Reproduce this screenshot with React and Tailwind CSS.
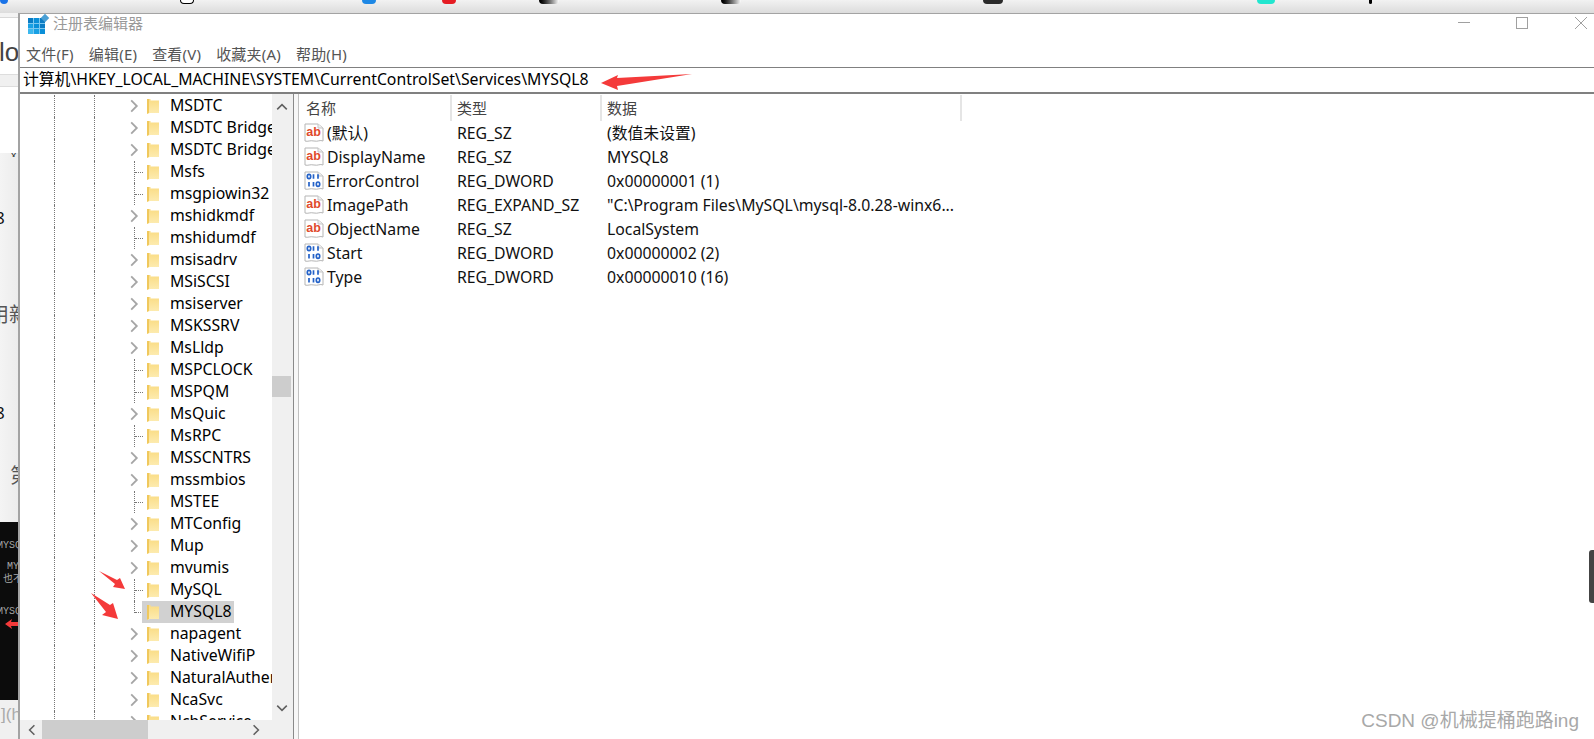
const TREE = [
  ["MSDTC", 1], ["MSDTC Bridge 4.0.0.0", 1], ["MSDTC Bridge 3.0.0.0", 1], ["Msfs", 0], ["msgpiowin32", 0],
  ["mshidkmdf", 1], ["mshidumdf", 0], ["msisadrv", 1], ["MSiSCSI", 1], ["msiserver", 1],
  ["MSKSSRV", 1], ["MsLldp", 1], ["MSPCLOCK", 0], ["MSPQM", 0], ["MsQuic", 1],
  ["MsRPC", 0], ["MSSCNTRS", 1], ["mssmbios", 1], ["MSTEE", 0], ["MTConfig", 1],
  ["Mup", 1], ["mvumis", 1], ["MySQL", 0], ["MYSQL8", 0], ["napagent", 1],
  ["NativeWifiP", 1], ["NaturalAuthentication", 1], ["NcaSvc", 1], ["NcbService", 1],
];

const ROWS = [
  ["ab", "(默认)", "REG_SZ", "(数值未设置)"],
  ["ab", "DisplayName", "REG_SZ", "MYSQL8"],
  ["bin", "ErrorControl", "REG_DWORD", "0x00000001 (1)"],
  ["ab", "ImagePath", "REG_EXPAND_SZ", "\"C:\\Program Files\\MySQL\\mysql-8.0.28-winx6..."],
  ["ab", "ObjectName", "REG_SZ", "LocalSystem"],
  ["bin", "Start", "REG_DWORD", "0x00000002 (2)"],
  ["bin", "Type", "REG_DWORD", "0x00000010 (16)"],
];

const FONT = "font-['Noto_Sans','Noto_Sans_CJK_SC',sans-serif]";

function Folder() {
  return (
    <svg width="12" height="16" viewBox="0 0 12 16" className="shrink-0">
      <defs>
        <linearGradient id="fg" x1="0" y1="0" x2="0" y2="1">
          <stop offset="0" stopColor="#fadc84" />
          <stop offset="1" stopColor="#fdecb2" />
        </linearGradient>
      </defs>
      <path d="M0 1h3.5v1.5H12V15H3L0 16z" fill="url(#fg)" />
      <path d="M0 1h2V14.8L0 16z" fill="#f0c85c" />
    </svg>
  );
}

function Chevron({ dir = "right", color = "#a6a6a6", size = 14 }) {
  const d = {
    right: "M3 1l4 4-4 4",
    left: "M7 1L3 5l4 4",
    up: "M1 7l4-4 4 4",
    down: "M1 3l4 4 4-4",
  }[dir];
  return (
    <svg width={size} height={size} viewBox="0 0 10 10" className="shrink-0">
      <path d={d} fill="none" stroke={color} strokeWidth="1.3" />
    </svg>
  );
}

function RegIcon({ kind }) {
  return (
    <svg width="20" height="20" viewBox="0 0 20 20" className="shrink-0">
      <path d="M1 1h13l5 4v13c-3-1.5-5 1-9 0s-6 1-9 0z" fill="#fff" stroke="#b5b5b5" />
      <path d="M14 1v4h5" fill="#eee" stroke="#c5c5c5" />
      {kind === "ab" ? (
        <text x="2.3" y="13" fontSize="12.5" fontWeight="700" fill="#e0492c" fontFamily="Liberation Sans, sans-serif">ab</text>
      ) : (
        <g fill="none" stroke="#2462c8" strokeWidth="1.7">
          <ellipse cx="5" cy="5.5" rx="1.7" ry="2.2" />
          <path d="M9.5 3.3v4.5M14 3.3v4.5" />
          <path d="M5 11v4.5M9.5 11v4.5" />
          <ellipse cx="14" cy="13.2" rx="1.7" ry="2.2" />
        </g>
      )}
    </svg>
  );
}

function TreeRow({ name, exp }) {
  const selected = name === "MYSQL8";
  return (
    <div className="flex h-[22px] shrink-0 items-center">
      <div className="w-[34px] shrink-0" />
      <div className="h-full w-[40px] shrink-0 border-l border-dotted border-[#777]" />
      <div className="h-full w-[40px] shrink-0 border-l border-dotted border-[#777]" />
      <div className="flex h-full w-[8px] shrink-0 items-center">
        {exp ? (
          <div className="ml-[-7px]"><Chevron /></div>
        ) : (
          <>
            <div className={`w-0 self-start border-l border-dotted border-[#777] ${selected ? "h-[12px]" : "h-full"}`} />
            <div className="h-0 w-[8px] shrink-0 border-t border-dotted border-[#777]" />
          </>
        )}
      </div>
      <div className={`flex h-full items-center pl-[5px] pr-[2px] ${selected ? "bg-[#d1d1d1]" : ""}`}>
        <Folder />
        <span className="mb-[1px] ml-[11px] whitespace-nowrap text-[15.8px] text-black">{name}</span>
      </div>
    </div>
  );
}

function TopStrip() {
  const marks = [
    ["w-[8px] bg-[#1a73e8]", 0], ["w-[14px] bg-white border-x border-b border-black", 172], ["w-[14px] bg-[#1e88e5]", 168],
    ["w-[14px] bg-[#e51c23]", 66], ["w-[20px] bg-gradient-to-r from-black to-white", 83], ["w-[20px] bg-gradient-to-r from-black to-white", 162],
    ["w-[20px] bg-[#2b2b2b]", 242], ["w-[18px] bg-[#22e6cf]", 254], ["w-[3px] bg-black", 94],
  ];
  return (
    <div className="flex h-[13px] shrink-0 bg-gradient-to-b from-[#f2f2f2] to-[#dcdcdc]">
      {marks.map(([c, m], i) => (
        <div key={i} className={`h-[4px] shrink-0 rounded-b-[4px] ${c}`} style={{ marginLeft: m }} />
      ))}
    </div>
  );
}

function LeftStrip() {
  return (
    <div className="relative flex w-[18px] shrink-0 flex-col overflow-hidden bg-white text-[#333]">
      <div className="h-[5px] shrink-0 border-b border-[#d8d8d8] bg-[#f3f3f3]" />
      <div className="h-[56px] shrink-0 overflow-hidden whitespace-nowrap pt-[17px] text-[26px] leading-[34px] text-[#444] font-['Liberation_Sans',sans-serif]">
        <span className="ml-[-1px] block">low</span>
      </div>
      <div className="h-[13px] shrink-0 border-y border-[#dddddd] bg-[#f0f0f0]" />
      <div className="h-[66px] shrink-0 bg-white" />
      <div className="flex h-[369px] shrink-0 flex-col whitespace-nowrap bg-gradient-to-r from-[#f4f4f4] to-[#ececec] text-[#333]">
        <div className="h-[4px] overflow-hidden pl-[11px] text-[10px] leading-[4px]">x</div>
        <div className="mt-[50px] ml-[-5px] h-[21px] text-[17px] leading-[21px] text-[#111]">8</div>
        <div className="mt-[76px] ml-[-11px] h-[20px] text-[20px] leading-[20px] text-[#555] font-['Noto_Sans_CJK_SC',sans-serif]">用新</div>
        <div className="mt-[78px] ml-[-5px] h-[21px] text-[17px] leading-[21px] text-[#111]">8</div>
        <div className="mt-[42px] ml-[10px] h-[20px] text-[20px] leading-[20px] text-[#555] font-['Noto_Sans_CJK_SC',sans-serif]">第</div>
      </div>
      <div className="flex h-[178px] shrink-0 flex-col bg-[#0c0c0c] font-['Liberation_Mono',monospace] text-[10px] leading-[12px] text-[#a8a8a8]">
        <div className="mt-[18px] ml-[-3px] whitespace-nowrap">MYSQL</div>
        <div className="mt-[9px] ml-[7px] whitespace-nowrap">MY</div>
        <div className="mt-[-1px] ml-[3px] whitespace-nowrap font-['Noto_Sans_CJK_SC',sans-serif] text-[10px]">也不</div>
        <div className="mt-[22px] ml-[-3px] whitespace-nowrap">MYSQL</div>
        <svg width="18" height="10" viewBox="0 0 18 10" className="mt-[1px] shrink-0">
          <path d="M5 5l7-5-1 3h7v4h-7l1 3z" fill="#f43a3a" />
        </svg>
      </div>
      <div className="flex-1 whitespace-nowrap bg-[#f0f0f0] pt-[2px] pl-[1px] text-[17px] text-[#aaa] font-['Liberation_Sans',sans-serif]">](h</div>
    </div>
  );
}

function WindowControls() {
  return (
    <div className="flex items-center">
      <svg width="12" height="12" viewBox="0 0 12 12" className="mr-[46px]"><path d="M0 5.5h12" stroke="#a0a0a0" /></svg>
      <svg width="12" height="12" viewBox="0 0 12 12" className="mr-[47px]"><rect x=".5" y=".5" width="11" height="11" fill="none" stroke="#a0a0a0" /></svg>
      <svg width="12" height="12" viewBox="0 0 12 12" className="mr-[7px]"><path d="M0 0l12 12M12 0L0 12" stroke="#a0a0a0" /></svg>
    </div>
  );
}

function AppIcon() {
  const cells = ["#0a7cc4", "#0a8fd8", "#0a7cc4", "#18a0e4", "#0a8fd8", "#0a7cc4", "#3cb8ee", "#18a0e4", "#0a8fd8"];
  return (
    <div className="relative mt-[6px] ml-[8px] mr-[8px] h-[16px] w-[17px] shrink-0">
      <div className="grid h-full w-full grid-cols-3 gap-px bg-[#7cc8f0]">
        {cells.map((c, i) => <div key={i} style={{ background: c }} />)}
      </div>
      <div className="absolute -top-[3px] -right-[3px] h-[6px] w-[6px] rotate-45 bg-[#4a9fd4]" />
    </div>
  );
}

export default function App() {
  return (
    <div className={`relative flex h-[739px] w-[1594px] flex-col overflow-hidden bg-white ${FONT}`}>
      <TopStrip />
      <div className="flex min-h-0 flex-1">
        <LeftStrip />
        <div className="flex min-w-0 flex-1 flex-col border-t border-l-2 border-[#a3a3a3] bg-white">
          <div className="flex h-[27px] shrink-0 items-center justify-between pb-[9px]">
            <div className="flex items-center">
              <AppIcon />
              <span className="text-[15px] text-[#999]">注册表编辑器</span>
            </div>
            <WindowControls />
          </div>
          <div className="flex h-[26px] shrink-0 items-center gap-[15px] bg-white pl-[6px] text-[15px] tracking-[0.2px] text-[#555]">
            <span>文件(F)</span>
            <span>编辑(E)</span>
            <span>查看(V)</span>
            <span>收藏夹(A)</span>
            <span>帮助(H)</span>
          </div>
          <div className="flex h-[27px] shrink-0 items-center border-t border-b-2 border-[#808080] bg-white pl-[3px] text-[15.8px] text-black">
            计算机\HKEY_LOCAL_MACHINE\SYSTEM\CurrentControlSet\Services\MYSQL8
          </div>
          <div className="flex min-h-0 flex-1">
            <div className="flex w-[271px] shrink-0 flex-col">
              <div className="flex min-h-0 flex-1">
                <div className="w-[252px] shrink-0 overflow-hidden pt-[1px]">
                  <div className="flex flex-col">
                    {TREE.map(([n, e], i) => <TreeRow key={i} name={n} exp={e} />)}
                  </div>
                </div>
                <div className="flex w-[19px] shrink-0 flex-col items-center bg-[#f0f0f0]">
                  <div className="mt-[7px]"><Chevron dir="up" color="#606060" size={12} /></div>
                  <div className="mt-[263px] h-[21px] w-full shrink-0 bg-[#cdcdcd]" />
                  <div className="mt-[305px]"><Chevron dir="down" color="#606060" size={12} /></div>
                </div>
              </div>
              <div className="flex h-[19px] shrink-0 items-center bg-[#f0f0f0] pl-[1px]">
                <div className="flex w-[21px] justify-center"><Chevron dir="left" color="#606060" size={12} /></div>
                <div className="h-full w-[106px] bg-[#cdcdcd]" />
                <div className="ml-[102px]"><Chevron dir="right" color="#606060" size={12} /></div>
              </div>
            </div>
            <div className="w-[2px] shrink-0 bg-[#f0f0f0]" />
            <div className="w-[6px] shrink-0 border-x border-[#8a8a8a] border-r-[#c0c0c0] bg-[#f7f7f7]" />
            <div className="flex min-w-0 flex-1 flex-col bg-white pt-[1px]">
              <div className="flex h-[26px] shrink-0 items-center text-[15px] text-[#444]">
                <div className="h-full w-[153px] border-r-2 border-[#e5e5e5] pl-[7px] leading-[26px]">名称</div>
                <div className="h-full w-[150px] border-r-2 border-[#e5e5e5] pl-[5px] leading-[26px]">类型</div>
                <div className="h-full w-[360px] border-r-2 border-[#e5e5e5] pl-[5px] leading-[26px]">数据</div>
              </div>
              {ROWS.map(([k, n, t, d]) => (
                <div key={n} className="flex h-[24px] shrink-0 items-center text-[15.8px] leading-[22px] text-[#111]">
                  <div className="flex w-[151px] items-center gap-[3px] pl-[5px]">
                    <RegIcon kind={k} />
                    <span>{n}</span>
                  </div>
                  <div className="w-[150px] pl-[7px]">{t}</div>
                  <div className="whitespace-nowrap pl-[7px]">{d}</div>
                </div>
              ))}
            </div>
          </div>
        </div>
      </div>

      <svg width="1594" height="739" viewBox="0 0 1594 739" className="pointer-events-none absolute left-0 top-0">
        <polygon points="601,83 618,75 617,78 692,74 617,86 618,90" fill="#f43a3a" />
        <polygon points="99,571 117,580 120,578 125,589 113,587 115,584" fill="#f43a3a" />
        <polygon points="91,593 110,605 113,603 118,619 102,615 106,612" fill="#f43a3a" />
      </svg>
      <div className="absolute right-0 top-[550px] h-[53px] w-[5px] rounded-l-[3px] bg-[#444]" />
      <div className="absolute right-[15px] top-[707px] text-[19px] text-[#a8a8a8] font-['Liberation_Sans','Noto_Sans_CJK_SC',sans-serif]">CSDN @机械提桶跑路ing</div>
    </div>
  );
}
